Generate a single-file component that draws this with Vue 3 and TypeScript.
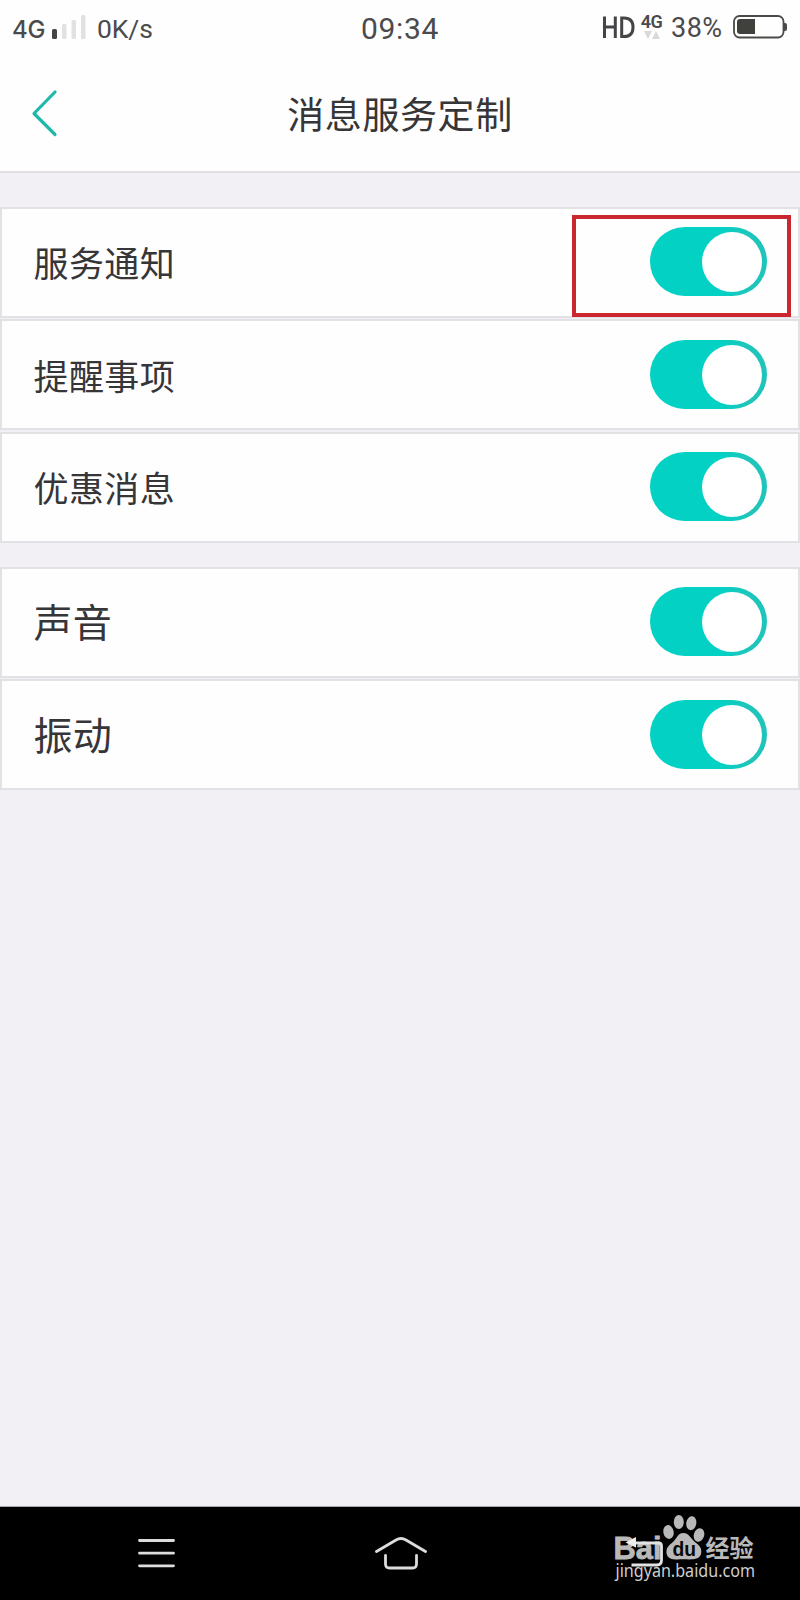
<script setup lang="ts">
import { reactive } from 'vue'

interface Setting {
  label: string
  on: boolean
  low?: boolean
  marked?: boolean
}

interface Group {
  id: string
  items: Setting[]
}

const groups = reactive<Group[]>([
  {
    id: 'messages',
    items: [
      { label: '服务通知', on: true, marked: true },
      { label: '提醒事项', on: true, low: true },
      { label: '优惠消息', on: true },
    ],
  },
  {
    id: 'alerts',
    items: [
      { label: '声音', on: true },
      { label: '振动', on: true, low: true },
    ],
  },
])
</script>

<template>
  <div class="screen">
    <header class="top">
      <div class="status">
        <div class="status-left">
          <span class="net">4G</span>
          <svg class="signal" width="34" height="24" viewBox="0 0 34 24">
            <rect x="0" y="14" width="5" height="10" rx="1.5" fill="#454446" />
            <rect x="10" y="9" width="4.5" height="15" rx="1.5" fill="#e1e1e1" />
            <rect x="19.5" y="5" width="4.5" height="19" rx="1.5" fill="#e1e1e1" />
            <rect x="29" y="0" width="4.5" height="24" rx="1.5" fill="#e1e1e1" />
          </svg>
          <span class="speed">0K/s</span>
        </div>
        <div class="clock">09:34</div>
        <div class="status-right">
          <svg class="hd" width="32" height="23" viewBox="0 0 32 23" fill="none" stroke="#454446" stroke-width="3">
            <path d="M1.5 0.5V22M12.3 0.5V22M1.5 11H12.3M18.7 2V20.5H21C27 20.5 30 17 30 11.2S27 2 21 2Z" />
          </svg>
          <div class="data">
            <span class="data-net">4G</span>
            <svg width="16" height="8" viewBox="0 0 16 8" fill="#d9d9d9">
              <path d="M0 0H8L4 8ZM8 8H16L12 0Z" />
            </svg>
          </div>
          <span class="percent">38%</span>
          <svg class="battery" width="55" height="24" viewBox="0 0 55 24">
            <rect x="1" y="1" width="49.5" height="21.5" rx="5.5" fill="none" stroke="#4a4a49" stroke-width="1.8" />
            <path d="M7 4H22V19H7Q4 19 4 16V7Q4 4 7 4Z" fill="#40413c" />
            <path d="M51 8H52Q54 8 54 10V14Q54 16 52 16H51Z" fill="#4a4a49" />
          </svg>
        </div>
      </div>
      <div class="nav">
        <button class="back" aria-label="返回">
          <svg width="28" height="48" viewBox="0 0 28 48" fill="none" stroke="#1fb9aa" stroke-width="3.2" stroke-linecap="round" stroke-linejoin="round">
            <path d="M24 3L3 24.5L24 45.5" />
          </svg>
        </button>
        <h1>消息服务定制</h1>
      </div>
    </header>

    <main>
      <section v-for="group in groups" :key="group.id" class="group" :class="group.id">
        <div v-for="item in group.items" :key="item.label" class="row" :class="{ low: item.low }">
          <span class="label">{{ item.label }}</span>
          <button class="toggle" :class="{ on: item.on }" role="switch" :aria-checked="item.on" @click="item.on = !item.on">
            <span class="knob"></span>
          </button>
          <span v-if="item.marked" class="mark"></span>
        </div>
      </section>
    </main>

    <footer class="bar">
      <svg class="menu-icon" width="38" height="30" viewBox="0 0 38 30" stroke="#dcdcdc" stroke-width="2.8" stroke-linecap="round">
        <path d="M1.5 2.5H35.5M1.5 15.2H35.5M1.5 27.8H35.5" />
      </svg>
      <svg class="home-icon" width="54" height="34" viewBox="0 0 54 34" fill="none" stroke="#dcdcdc" stroke-width="2.8" stroke-linecap="round" stroke-linejoin="round">
        <path d="M2.5 15.5L22 4Q27 1 32 4L51.5 15.5M11.5 19.5V28Q11.5 32 15.5 32H38.5Q42.5 32 42.5 28V19.5" />
      </svg>
      <svg class="watermark" width="170" height="88" viewBox="0 0 170 88">
        <g fill="#b9b9b9">
          <text x="2.5" y="48.5" class="brand" font-size="32" textLength="48" lengthAdjust="spacingAndGlyphs">Bai</text>
          <ellipse cx="57.5" cy="22" rx="5.2" ry="7" transform="rotate(-12 57.5 22)" />
          <ellipse cx="67.8" cy="12" rx="5" ry="7" />
          <ellipse cx="80.3" cy="13.2" rx="5" ry="7" transform="rotate(10 80.3 13.2)" />
          <ellipse cx="88" cy="25" rx="5.2" ry="6.8" transform="rotate(18 88 25)" />
          <path d="M72.5 23C78 23 80 29 84 32C88 35 91 38 90.2 43C89 50 82 49.5 73 49.3C64 49.5 56.5 50.5 55.5 43C55 38 58 35 62 32C66 28 67 23 72.5 23Z" />
          <text x="94.5" y="46.5" class="cn" font-size="24" textLength="48" lengthAdjust="spacingAndGlyphs">经验</text>
        </g>
        <text x="61.5" y="45.5" class="du" font-size="20" fill="#080808" textLength="23.5" lengthAdjust="spacingAndGlyphs">du</text>
        <path d="M22 33H47.5Q50.5 33 50.5 36V50Q50.5 55 46 55H20.5" fill="none" stroke="#e2e2e2" stroke-width="2.8" />
        <path d="M14.5 32.5L25 27V37.5Z" fill="#eeeeee" />
        <text x="4.5" y="67" class="url" font-size="17.2" fill="#cfcfcf" textLength="139.5" lengthAdjust="spacingAndGlyphs">jingyan.baidu.com</text>
      </svg>
    </footer>
  </div>
</template>

<style>
body {
  background: #f2f0f4;
}
</style>

<style scoped>
.screen {
  display: flex;
  flex-direction: column;
  width: 800px;
  height: 1600px;
  overflow: hidden;
  background: #f2f0f4;
  color: #363537;
  font-family: Roboto, "Noto Sans CJK SC", sans-serif;
}

.top {
  box-sizing: border-box;
  height: 173px;
  background: #fefefe;
  border-bottom: 2px solid #e1dfe3;
}

.status {
  display: grid;
  grid-template-columns: 1fr auto 1fr;
  align-items: center;
  box-sizing: border-box;
  height: 56px;
  padding: 0 12px;
  color: #4b4a4c;
  white-space: nowrap;
}

.status-left,
.status-right {
  display: flex;
  align-items: center;
}

.status-right {
  justify-content: flex-end;
}

.net {
  font: 500 24px/28px Inter, sans-serif;
  width: 34px;
  letter-spacing: -0.3px;
  margin-top: 4px;
}

.signal {
  margin: -3px 0 0 6px;
}

.speed {
  margin-left: 11px;
  font-size: 26.5px;
  letter-spacing: -0.1px;
}

.clock {
  font-size: 30px;
  letter-spacing: 0.7px;
}

.hd {
  margin-top: -2px;
}

.data {
  display: flex;
  flex-direction: column;
  align-items: center;
  width: 21px;
  margin: -5px 9px 0 6px;
}

.data-net {
  font: 600 18px/18px Roboto, sans-serif;
  letter-spacing: -0.5px;
}

.percent {
  width: 54px;
  font-size: 27px;
  letter-spacing: 0.5px;
}

.battery {
  margin: -3px 0 0 8px;
}

.nav {
  position: relative;
  display: flex;
  justify-content: center;
  height: 115px;
}

.back {
  position: absolute;
  left: 31px;
  top: 33px;
  padding: 0;
  border: 0;
  background: none;
  line-height: 0;
}

h1 {
  margin: 0;
  font-size: 37px;
  font-weight: 400;
  line-height: 121px;
  letter-spacing: 0.6px;
}

main {
  flex: 1;
  padding-top: 34px;
}

.group {
  margin-bottom: 24px;
}

.row {
  position: relative;
  display: flex;
  align-items: flex-start;
  justify-content: space-between;
  box-sizing: border-box;
  height: 111px;
  padding: 18px 31.5px 0 31.5px;
  border: 2px solid #e2e1e4;
  background: #fefefe;
}

.row.low {
  margin-top: 1px;
  padding-top: 19px;
}

.row.low + .row {
  margin-top: 2px;
}

.label {
  font-size: 35px;
  line-height: 77px;
  letter-spacing: 0.4px;
}

.alerts .label {
  font-size: 39px;
  line-height: 75px;
  letter-spacing: 0.3px;
}

.toggle {
  box-sizing: border-box;
  width: 117px;
  height: 69px;
  padding: 4.5px;
  border: 0;
  border-radius: 35px;
  background: #c9c9cc;
  display: flex;
}

.toggle.on {
  justify-content: flex-end;
  background: linear-gradient(90deg, #03d1c4 60%, #1fc5ba 85%);
}

.knob {
  width: 60px;
  height: 60px;
  border-radius: 50%;
  background: #fff;
}

.mark {
  position: absolute;
  left: 570px;
  top: 6px;
  box-sizing: border-box;
  width: 219px;
  height: 102px;
  border: 4px solid #cb2731;
  pointer-events: none;
}

.bar {
  position: relative;
  box-sizing: border-box;
  height: 94px;
  background: #000;
  border-top: 1px solid #a4abae;
}

.menu-icon {
  position: absolute;
  left: 138px;
  top: 31px;
}

.home-icon {
  position: absolute;
  left: 374px;
  top: 29px;
}

.watermark {
  position: absolute;
  left: 610.5px;
  top: 3px;
}

.brand,
.du {
  font-family: "Liberation Sans", sans-serif;
  font-weight: 700;
}

.brand {
  stroke: #b9b9b9;
  stroke-width: 0.8px;
}

.cn {
  font-family: "Noto Sans CJK SC", sans-serif;
  font-weight: 700;
}

.url {
  font-family: "Noto Sans", sans-serif;
}
</style>
